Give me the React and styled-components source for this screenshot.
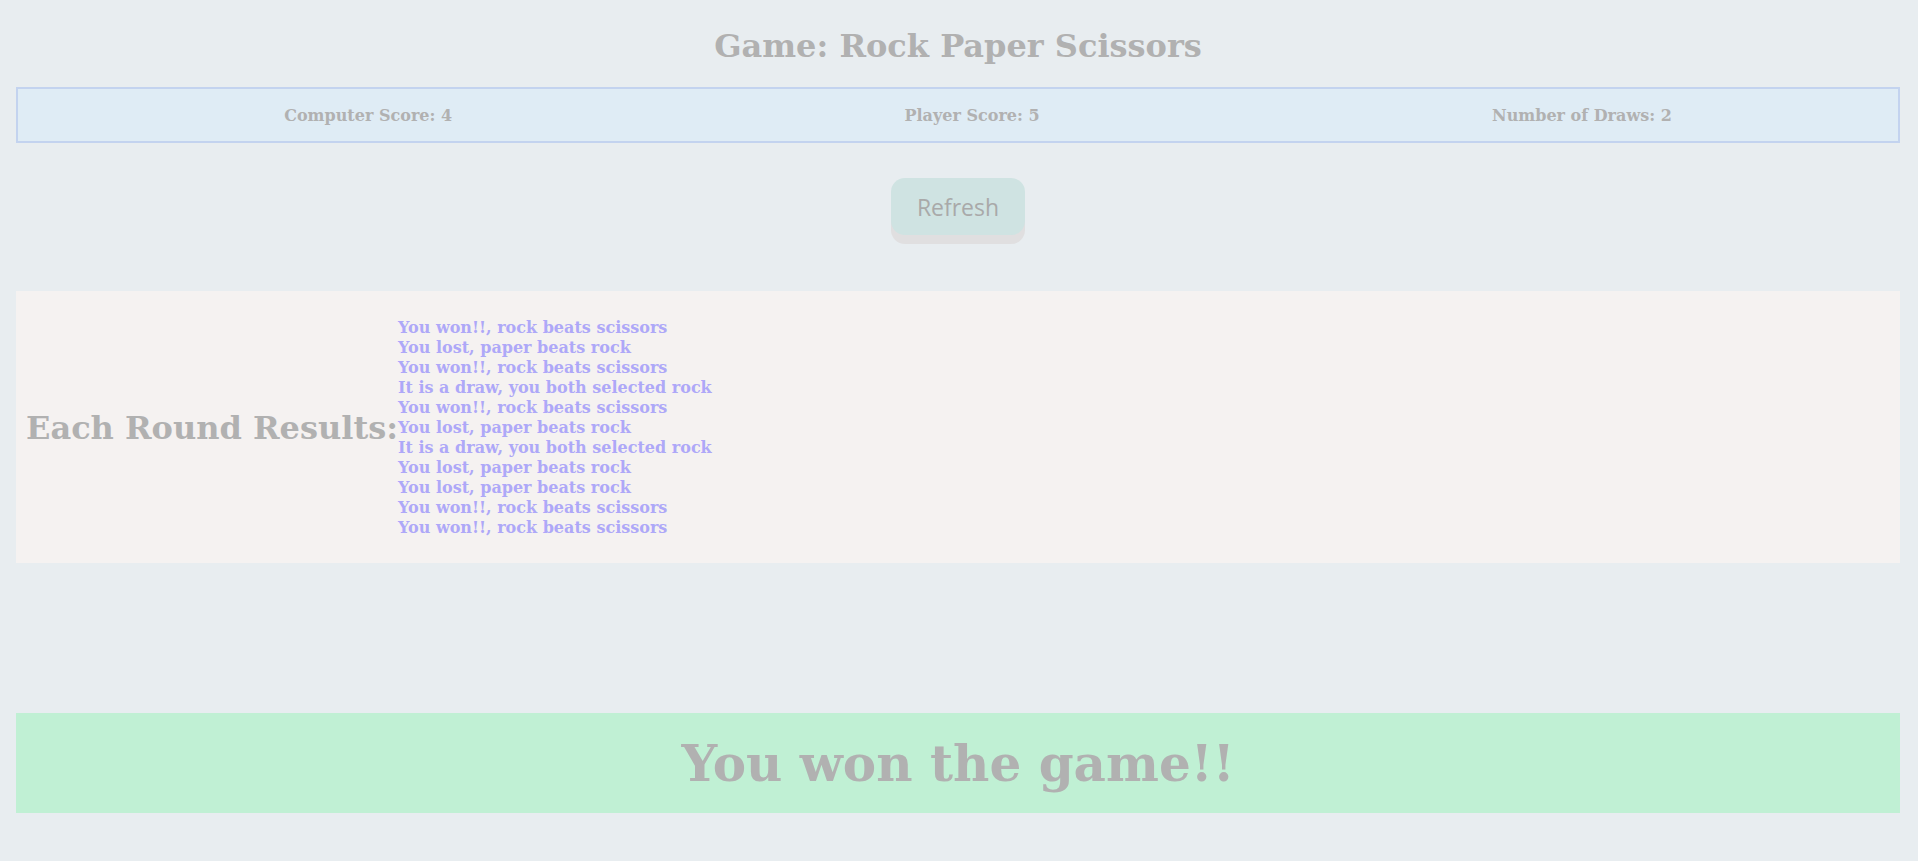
import React from "react";
import styled, { createGlobalStyle } from "styled-components";

const Global = createGlobalStyle`
  html, body { margin: 0; padding: 0; background: #e8edf0; }
  body { font-family: "DejaVu Serif", serif; color: #b1b1b1; }
`;

const Page = styled.div`
  display: flex;
  flex-direction: column;
  padding: 0 18px 48px 16px;
`;

const Title = styled.h1`
  margin: 27px 0 0;
  font-size: 32px;
  font-weight: bold;
  text-align: center;
  color: #b1b1b1;
`;

const ScoreBar = styled.ul`
  display: flex;
  justify-content: space-around;
  align-items: center;
  margin: 22px 0 0;
  padding: 0 0 0 40px;
  height: 52px;
  list-style: none;
  background: #dfecf5;
  border: 2px solid #c3d3ef;
`;

const ScoreItem = styled.li`
  font-size: 16px;
  font-weight: bold;
  color: #b1b1b1;
`;

const ButtonRow = styled.div`
  display: flex;
  justify-content: center;
  margin-top: 35px;
`;

const RefreshButton = styled.button`
  width: 134px;
  height: 57px;
  border: none;
  border-radius: 14px;
  background: #cfe3e2;
  box-shadow: 0 9px 0 0 #e0dfe0;
  font-family: "Open Sans", sans-serif;
  font-size: 23px;
  padding: 0;
  color: #a9a9a9;
  cursor: pointer;
`;

const Results = styled.section`
  display: flex;
  align-items: center;
  margin-top: 56px;
  padding: 27px 10px 25px;
  background: #f5f2f1;
`;

const ResultsHeading = styled.h2`
  margin: 0;
  font-size: 32px;
  font-weight: bold;
  color: #b1b1b1;
`;

const ResultList = styled.div`
  display: flex;
  flex-direction: column;
`;

const ResultLine = styled.div`
  font-size: 16px;
  line-height: 20px;
  font-weight: bold;
  color: #aea8f8;
`;

const Banner = styled.div`
  display: flex;
  align-items: center;
  justify-content: center;
  margin-top: 150px;
  height: 100px;
  background: #c0f0d4;
`;

const BannerText = styled.h1`
  margin: 0;
  font-size: 50px;
  font-weight: bold;
  color: #b1b1b1;
`;

const rounds = [
  "You won!!, rock beats scissors",
  "You lost, paper beats rock",
  "You won!!, rock beats scissors",
  "It is a draw, you both selected rock",
  "You won!!, rock beats scissors",
  "You lost, paper beats rock",
  "It is a draw, you both selected rock",
  "You lost, paper beats rock",
  "You lost, paper beats rock",
  "You won!!, rock beats scissors",
  "You won!!, rock beats scissors",
];

export default function App() {
  return (
    <>
      <Global />
      <Page>
        <Title>Game: Rock Paper Scissors</Title>
        <ScoreBar>
          <ScoreItem>Computer Score: 4</ScoreItem>
          <ScoreItem>Player Score: 5</ScoreItem>
          <ScoreItem>Number of Draws: 2</ScoreItem>
        </ScoreBar>
        <ButtonRow>
          <RefreshButton>Refresh</RefreshButton>
        </ButtonRow>
        <Results>
          <ResultsHeading>Each Round Results:</ResultsHeading>
          <ResultList>
            {rounds.map((r, i) => (
              <ResultLine key={i}>{r}</ResultLine>
            ))}
          </ResultList>
        </Results>
        <Banner>
          <BannerText>You won the game!!</BannerText>
        </Banner>
      </Page>
    </>
  );
}
